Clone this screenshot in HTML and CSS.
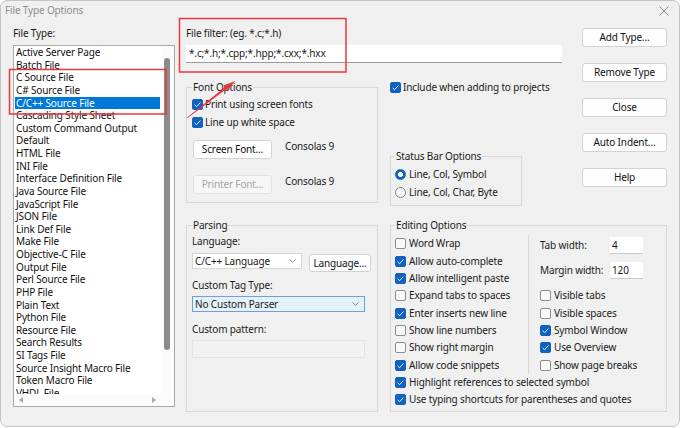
FILE: index.html
```html
<!DOCTYPE html>
<html>
<head>
<meta charset="utf-8">
<title>File Type Options</title>
<link rel="stylesheet" href="styles.css">
</head>
<body>
<div class="window">
  <div class="titlebar">
    <span class="title">File Type Options</span>
    <svg class="close" width="10" height="10" viewBox="0 0 10 10"><path d="M0.5 0.5L9.5 9.5M9.5 0.5L0.5 9.5" stroke="#8a8a8a" stroke-width="1" fill="none"/></svg>
  </div>
  <div class="main">
    <div class="left">
      <div class="label">File Type:</div>
      <div class="listbox">
        <div class="items">
          <div class="item">Active Server Page</div>
          <div class="item">Batch File</div>
          <div class="item">C Source File</div>
          <div class="item">C# Source File</div>
          <div class="item sel">C/C++ Source File</div>
          <div class="item">Cascading Style Sheet</div>
          <div class="item">Custom Command Output</div>
          <div class="item">Default</div>
          <div class="item">HTML File</div>
          <div class="item">INI File</div>
          <div class="item">Interface Definition File</div>
          <div class="item">Java Source File</div>
          <div class="item">JavaScript File</div>
          <div class="item">JSON File</div>
          <div class="item">Link Def File</div>
          <div class="item">Make File</div>
          <div class="item">Objective-C File</div>
          <div class="item">Output File</div>
          <div class="item">Perl Source File</div>
          <div class="item">PHP File</div>
          <div class="item">Plain Text</div>
          <div class="item">Python File</div>
          <div class="item">Resource File</div>
          <div class="item">Search Results</div>
          <div class="item">SI Tags File</div>
          <div class="item">Source Insight Macro File</div>
          <div class="item">Token Macro File</div>
          <div class="item">VHDL File</div>
        </div>
        <div class="vscroll"><div class="thumb"></div></div>
        <div class="hscroll"><span class="tri-left"></span><span class="tri-right"></span></div>
        <div class="corner"></div>
      </div>
    </div>

    <div class="right">
      <div class="top">
        <div class="topleft">
          <div class="label">File filter: (eg. *.c;*.h)</div>
          <div class="edit filter">*.c;*.h;*.cpp;*.hpp;*.cxx;*.hxx</div>
          <div class="toprow">
            <fieldset class="group font-group">
              <legend>Font Options</legend>
              <div class="check row18"><span class="box on"><svg viewBox="0 0 11 11"><path d="M2.6 5.8l2 1.9 3.8-4.2" stroke="#fff" stroke-width="0.9" fill="none"/></svg></span><span>Print using screen fonts</span></div>
              <div class="check row18"><span class="box on"><svg viewBox="0 0 11 11"><path d="M2.6 5.8l2 1.9 3.8-4.2" stroke="#fff" stroke-width="0.9" fill="none"/></svg></span><span>Line up white space</span></div>
              <div class="fontrow first">
                <button class="btn fontbtn">Screen Font...</button>
                <span>Consolas 9</span>
              </div>
              <div class="fontrow second">
                <button class="btn fontbtn disabled">Printer Font...</button>
                <span>Consolas 9</span>
              </div>
            </fieldset>
            <div class="include-col">
              <div class="check row13"><span class="box on"><svg viewBox="0 0 11 11"><path d="M2.6 5.8l2 1.9 3.8-4.2" stroke="#fff" stroke-width="0.9" fill="none"/></svg></span><span>Include when adding to projects</span></div>
              <fieldset class="group status-group">
                <legend>Status Bar Options</legend>
                <div class="check row18"><span class="radio on"></span><span>Line, Col, Symbol</span></div>
                <div class="check row18"><span class="radio"></span><span>Line, Col, Char, Byte</span></div>
              </fieldset>
            </div>
          </div>
        </div>
        <div class="buttons">
          <button class="btn">Add Type...</button>
          <button class="btn">Remove Type</button>
          <button class="btn">Close</button>
          <button class="btn">Auto Indent...</button>
          <button class="btn">Help</button>
        </div>
      </div>

      <div class="bottom">
        <fieldset class="group parsing">
          <legend>Parsing</legend>
          <div class="label">Language:</div>
          <div class="langrow">
            <div class="combo lang"><span>C/C++ Language</span><svg width="7" height="4" viewBox="0 0 7 4"><path d="M0.5 0.5L3.5 3.3L6.5 0.5" stroke="#7a7a7a" fill="none" stroke-width="0.9"/></svg></div>
            <button class="btn langbtn">Language...</button>
          </div>
          <div class="label tagtype">Custom Tag Type:</div>
          <div class="combo parser"><span>No Custom Parser</span><svg width="7" height="4" viewBox="0 0 7 4"><path d="M0.5 0.5L3.5 3.3L6.5 0.5" stroke="#7a7a7a" fill="none" stroke-width="0.9"/></svg></div>
          <div class="label pattern">Custom pattern:</div>
          <div class="field-disabled"></div>
        </fieldset>

        <fieldset class="group editing">
          <legend>Editing Options</legend>
          <div class="egrid">
            <div class="ecol1">
              <div class="check erow"><span class="box"></span><span>Word Wrap</span></div>
              <div class="check erow"><span class="box on"><svg viewBox="0 0 11 11"><path d="M2.6 5.8l2 1.9 3.8-4.2" stroke="#fff" stroke-width="0.9" fill="none"/></svg></span><span>Allow auto-complete</span></div>
              <div class="check erow"><span class="box on"><svg viewBox="0 0 11 11"><path d="M2.6 5.8l2 1.9 3.8-4.2" stroke="#fff" stroke-width="0.9" fill="none"/></svg></span><span>Allow intelligent paste</span></div>
              <div class="check erow"><span class="box"></span><span>Expand tabs to spaces</span></div>
              <div class="check erow"><span class="box on"><svg viewBox="0 0 11 11"><path d="M2.6 5.8l2 1.9 3.8-4.2" stroke="#fff" stroke-width="0.9" fill="none"/></svg></span><span>Enter inserts new line</span></div>
              <div class="check erow"><span class="box"></span><span>Show line numbers</span></div>
              <div class="check erow"><span class="box"></span><span>Show right margin</span></div>
              <div class="check erow"><span class="box on"><svg viewBox="0 0 11 11"><path d="M2.6 5.8l2 1.9 3.8-4.2" stroke="#fff" stroke-width="0.9" fill="none"/></svg></span><span>Allow code snippets</span></div>
            </div>
            <div class="ecol2">
              <div class="numrow tabrow"><span class="numlabel">Tab width:</span><span class="numedit">4</span></div>
              <div class="numrow marginrow"><span class="numlabel">Margin width:</span><span class="numedit">120</span></div>
              <div class="check erow vt"><span class="box"></span><span>Visible tabs</span></div>
              <div class="check erow"><span class="box"></span><span>Visible spaces</span></div>
              <div class="check erow"><span class="box on"><svg viewBox="0 0 11 11"><path d="M2.6 5.8l2 1.9 3.8-4.2" stroke="#fff" stroke-width="0.9" fill="none"/></svg></span><span>Symbol Window</span></div>
              <div class="check erow"><span class="box on"><svg viewBox="0 0 11 11"><path d="M2.6 5.8l2 1.9 3.8-4.2" stroke="#fff" stroke-width="0.9" fill="none"/></svg></span><span>Use Overview</span></div>
              <div class="check erow"><span class="box"></span><span>Show page breaks</span></div>
            </div>
            <div class="check erow full"><span class="box on"><svg viewBox="0 0 11 11"><path d="M2.6 5.8l2 1.9 3.8-4.2" stroke="#fff" stroke-width="0.9" fill="none"/></svg></span><span>Highlight references to selected symbol</span></div>
            <div class="check erow full"><span class="box on"><svg viewBox="0 0 11 11"><path d="M2.6 5.8l2 1.9 3.8-4.2" stroke="#fff" stroke-width="0.9" fill="none"/></svg></span><span>Use typing shortcuts for parentheses and quotes</span></div>
          </div>
        </fieldset>
      </div>
    </div>
  </div>

  <svg class="annot" width="680" height="428" viewBox="0 0 680 428">
    <rect x="9.5" y="69.5" width="156.5" height="44.5" fill="none" stroke="#e8393e" stroke-width="1.5"/>
    <rect x="179.5" y="18.5" width="166.5" height="53.5" fill="none" stroke="#e8393e" stroke-width="1.5"/>
    <polygon points="187.24,118.32 226.2,89.25 227.6,91.1 235,81 223.4,85.5 224.8,87.35 186.76,117.68" fill="#e8393e"/>
  </svg>
</div>
</body>
</html>
```

FILE: styles.css
```css
* { box-sizing: border-box; }
html, body { margin: 0; padding: 0; }
body {
  background: #ffffff;
  font-family: "Noto Sans", "Liberation Sans", sans-serif;
  font-size: 10px;
  line-height: 13px;
  letter-spacing: -0.15px;
  color: #1a1a1a;
}
.window {
  width: 680px;
  height: 427px;
  background: #f0f0f0;
  border: 1px solid #c4c4c4;
  border-radius: 7px;
  position: relative;
  overflow: hidden;
}
.titlebar {
  height: 19px;
  display: flex;
  align-items: center;
  justify-content: space-between;
  padding: 0 10px 0 4px;
}
.title { color: #8e8e8e; }
.close { display: block; }

.main {
  display: flex;
  gap: 11px;
  padding: 7px 0 0 12px;
}
.left { width: 162px; flex: none; }
.label { height: 13px; white-space: nowrap; }

.listbox {
  margin-top: 5px;
  height: 362px;
  background: #fff;
  border: 1px solid #a9a9a9;
  display: grid;
  grid-template-columns: 148px 12px;
  grid-template-rows: 348px 12px;
}
.items { overflow: hidden; }
.item {
  height: 12.63px;
  line-height: 12.63px;
  margin: 0 2px 0 1px;
  padding-left: 1px;
  white-space: nowrap;
  color: #111;
}
.item.sel { background: #0078d7; color: #fff; }
.vscroll { background: #fbfbfb; padding-top: 12px; }
.thumb {
  margin-left: 2px;
  width: 6px;
  height: 292px;
  background: #8b8b8b;
  border-radius: 3px;
}
.hscroll {
  background: #fbfbfb;
  display: flex;
  align-items: center;
  justify-content: space-between;
  padding: 0 6px 0 5px;
}
.corner { background: #fbfbfb; }
.tri-left, .tri-right { width: 0; height: 0; border-top: 3px solid transparent; border-bottom: 3px solid transparent; }
.tri-left { border-right: 4px solid #a8a8a8; }
.tri-right { border-left: 4px solid #a8a8a8; }

.right { width: 481px; flex: none; }
.top { display: flex; gap: 20px; }
.topleft { width: 376px; flex: none; }
.edit {
  background: #fff;
  border-bottom: 1px solid #9a9a9a;
  height: 18px;
  line-height: 17px;
  padding-left: 3px;
  white-space: nowrap;
}
.filter { margin-top: 5px; }
.toprow {
  display: flex;
  align-items: flex-start;
  gap: 12px;
  margin-top: 18px;
  height: 126px;
}
.buttons {
  width: 85px;
  flex: none;
  display: flex;
  flex-direction: column;
  gap: 16px;
  padding-top: 1px;
}
.btn {
  font: inherit;
  letter-spacing: inherit;
  color: #111;
  height: 19px;
  margin: 0;
  padding: 0;
  background: #fdfdfd;
  border: 1px solid #d3d3d3;
  border-radius: 3px;
  display: flex;
  align-items: center;
  justify-content: center;
  white-space: nowrap;
}
.btn.disabled { background: #f6f6f6; border-color: #e2e2e2; color: #a5a5a5; }

fieldset.group {
  margin: 0;
  min-width: 0;
  border: 1px solid #d8d8d8;
}
legend { padding: 0 1px; line-height: 13px; height: 13px; white-space: nowrap; }

.check { display: flex; align-items: center; gap: 2px; white-space: nowrap; }
.row18 { height: 18px; }
.row13 { height: 13px; }
.box {
  width: 11px;
  height: 11px;
  flex: none;
  border: 1px solid #8c8c8c;
  border-radius: 2px;
  background: #f9f9f9;
  display: block;
}
.box.on { background: #0f62c0; border-color: #0f62c0; }
.box svg { display: block; width: 11px; height: 11px; margin: -1px; }
.radio {
  width: 11px;
  height: 11px;
  flex: none;
  border: 1px solid #858585;
  border-radius: 50%;
  background: #f9f9f9;
}
.radio.on {
  border-color: #0f62c0;
  background: radial-gradient(circle, #ffffff 0 2.2px, #0f62c0 2.8px);
}

fieldset.font-group { width: 192px; padding: 1px 5px 8px 5px; }
.fontrow { display: flex; align-items: flex-start; gap: 13px; }
.fontrow.first { margin-top: 9px; }
.fontrow.second { margin-top: 16px; }
.fontbtn { width: 79px; margin-left: 1px; }

.include-col { width: 132px; flex: none; }
fieldset.status-group { margin-top: 56px; width: 132px; padding: 2px 4px 4px 4px; }
.status-group .check { gap: 3px; }

.bottom { display: flex; gap: 12px; margin-top: 12px; }
fieldset.parsing { width: 192px; height: 193px; padding: 3px 5px 0 5px; }
.langrow { display: flex; gap: 7px; margin-top: 5px; height: 19px; }
.combo {
  height: 16px;
  background: #fff;
  border: 1px solid #d6d6d6;
  display: flex;
  align-items: center;
  justify-content: space-between;
  padding: 0 5px 0 2px;
  white-space: nowrap;
}
.combo.lang { width: 110px; }
.langbtn { width: 62px; height: 18px; margin-top: 1px; }
.tagtype { margin-top: 6.5px; }
.combo.parser { width: 173px; margin-top: 4.5px; background: #e5f1fb; border-color: #6aa3da; }
.pattern { margin-top: 10.5px; }
.field-disabled { width: 173px; height: 18px; margin-top: 4.5px; background: #f2f2f2; border: 1px solid #e3e3e3; }

fieldset.editing { width: 277px; height: 193px; padding: 3.33px 4px 0 4px; }
.egrid { display: grid; grid-template-columns: 133px 1fr; }
.erow { height: 17.33px; gap: 3px; }
.ecol2 { border-left: 1px solid #d8d8d8; padding-left: 11px; }
.full { grid-column: 1 / -1; }
.numrow { display: flex; align-items: center; height: 17px; }
.tabrow { margin-top: 1.67px; }
.marginrow { margin-top: 8px; }
.vt { margin-top: 8.33px; }
.numlabel { width: 70px; white-space: nowrap; }
.numedit {
  width: 33px;
  height: 17px;
  background: #fff;
  border-bottom: 1px solid #c8c8c8;
  padding-left: 2px;
  line-height: 16px;
}

.annot {
  position: absolute;
  left: -1px;
  top: -1px;
  pointer-events: none;
}
```
